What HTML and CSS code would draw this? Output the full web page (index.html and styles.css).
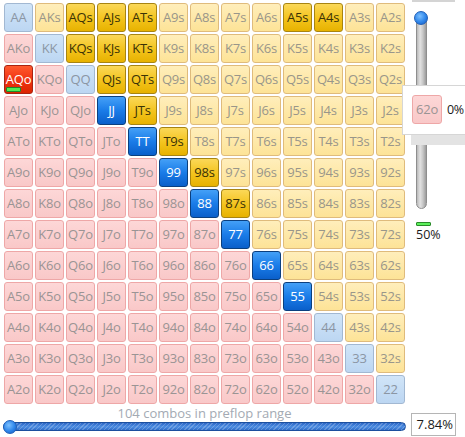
FILE: index.html
```html
<!DOCTYPE html>
<html>
<head>
<meta charset="utf-8">
<link rel="stylesheet" href="styles.css">
</head>
<body>
<div class="app">
  <div class="top">
    <div class="grid">
      <div class="c p">AA</div><div class="c s">AKs</div><div class="c s on">AQs</div><div class="c s on">AJs</div><div class="c s on">ATs</div><div class="c s">A9s</div><div class="c s">A8s</div><div class="c s">A7s</div><div class="c s">A6s</div><div class="c s on">A5s</div><div class="c s on">A4s</div><div class="c s">A3s</div><div class="c s">A2s</div>
      <div class="c o">AKo</div><div class="c p">KK</div><div class="c s on">KQs</div><div class="c s on">KJs</div><div class="c s on">KTs</div><div class="c s">K9s</div><div class="c s">K8s</div><div class="c s">K7s</div><div class="c s">K6s</div><div class="c s">K5s</div><div class="c s">K4s</div><div class="c s">K3s</div><div class="c s">K2s</div>
      <div class="c o hot">AQo<span class="mark"></span></div><div class="c o">KQo</div><div class="c p">QQ</div><div class="c s on">QJs</div><div class="c s on">QTs</div><div class="c s">Q9s</div><div class="c s">Q8s</div><div class="c s">Q7s</div><div class="c s">Q6s</div><div class="c s">Q5s</div><div class="c s">Q4s</div><div class="c s">Q3s</div><div class="c s">Q2s</div>
      <div class="c o">AJo</div><div class="c o">KJo</div><div class="c o">QJo</div><div class="c p on">JJ</div><div class="c s on">JTs</div><div class="c s">J9s</div><div class="c s">J8s</div><div class="c s">J7s</div><div class="c s">J6s</div><div class="c s">J5s</div><div class="c s">J4s</div><div class="c s">J3s</div><div class="c s">J2s</div>
      <div class="c o">ATo</div><div class="c o">KTo</div><div class="c o">QTo</div><div class="c o">JTo</div><div class="c p on">TT</div><div class="c s on">T9s</div><div class="c s">T8s</div><div class="c s">T7s</div><div class="c s">T6s</div><div class="c s">T5s</div><div class="c s">T4s</div><div class="c s">T3s</div><div class="c s">T2s</div>
      <div class="c o">A9o</div><div class="c o">K9o</div><div class="c o">Q9o</div><div class="c o">J9o</div><div class="c o">T9o</div><div class="c p on">99</div><div class="c s on">98s</div><div class="c s">97s</div><div class="c s">96s</div><div class="c s">95s</div><div class="c s">94s</div><div class="c s">93s</div><div class="c s">92s</div>
      <div class="c o">A8o</div><div class="c o">K8o</div><div class="c o">Q8o</div><div class="c o">J8o</div><div class="c o">T8o</div><div class="c o">98o</div><div class="c p on">88</div><div class="c s on">87s</div><div class="c s">86s</div><div class="c s">85s</div><div class="c s">84s</div><div class="c s">83s</div><div class="c s">82s</div>
      <div class="c o">A7o</div><div class="c o">K7o</div><div class="c o">Q7o</div><div class="c o">J7o</div><div class="c o">T7o</div><div class="c o">97o</div><div class="c o">87o</div><div class="c p on">77</div><div class="c s">76s</div><div class="c s">75s</div><div class="c s">74s</div><div class="c s">73s</div><div class="c s">72s</div>
      <div class="c o">A6o</div><div class="c o">K6o</div><div class="c o">Q6o</div><div class="c o">J6o</div><div class="c o">T6o</div><div class="c o">96o</div><div class="c o">86o</div><div class="c o">76o</div><div class="c p on">66</div><div class="c s">65s</div><div class="c s">64s</div><div class="c s">63s</div><div class="c s">62s</div>
      <div class="c o">A5o</div><div class="c o">K5o</div><div class="c o">Q5o</div><div class="c o">J5o</div><div class="c o">T5o</div><div class="c o">95o</div><div class="c o">85o</div><div class="c o">75o</div><div class="c o">65o</div><div class="c p on">55</div><div class="c s">54s</div><div class="c s">53s</div><div class="c s">52s</div>
      <div class="c o">A4o</div><div class="c o">K4o</div><div class="c o">Q4o</div><div class="c o">J4o</div><div class="c o">T4o</div><div class="c o">94o</div><div class="c o">84o</div><div class="c o">74o</div><div class="c o">64o</div><div class="c o">54o</div><div class="c p">44</div><div class="c s">43s</div><div class="c s">42s</div>
      <div class="c o">A3o</div><div class="c o">K3o</div><div class="c o">Q3o</div><div class="c o">J3o</div><div class="c o">T3o</div><div class="c o">93o</div><div class="c o">83o</div><div class="c o">73o</div><div class="c o">63o</div><div class="c o">53o</div><div class="c o">43o</div><div class="c p">33</div><div class="c s">32s</div>
      <div class="c o">A2o</div><div class="c o">K2o</div><div class="c o">Q2o</div><div class="c o">J2o</div><div class="c o">T2o</div><div class="c o">92o</div><div class="c o">82o</div><div class="c o">72o</div><div class="c o">62o</div><div class="c o">52o</div><div class="c o">42o</div><div class="c o">32o</div><div class="c p">22</div>
    </div>
    <div class="side">
      <div class="frame"></div>
      <div class="vslider">
        <div class="vtrack"></div>
        <div class="knob vknob"></div>
      </div>
      <div class="gbar"></div>
      <div class="pct">50%</div>
    </div>
  </div>
  <div class="bottom">
    <div class="hcol">
      <div class="label">104 combos in preflop range</div>
      <div class="hslider">
        <div class="htrack"></div>
        <div class="knob hknob"></div>
      </div>
    </div>
    <div class="valbox">7.84%</div>
  </div>
  <div class="tip">
    <div class="c o tipcell">62o</div>
    <div class="tipval">0%</div>
  </div>
</div>
</body>
</html>
```

FILE: styles.css
```css
html, body {
  margin: 0;
  padding: 0;
  overflow: hidden;
  background: #ffffff;
}
body {
  width: 465px;
  height: 437px;
  font-family: "Open Sans", "Noto Sans", "DejaVu Sans", sans-serif;
}
.app {
  position: relative;
  width: 465px;
  height: 437px;
}
.top {
  display: flex;
  align-items: flex-start;
}
.grid {
  display: grid;
  grid-template-columns: repeat(13, 29px);
  grid-auto-rows: 29px;
  gap: 2px;
  padding: 3px 0 0 4px;
}
.c {
  position: relative;
  box-sizing: border-box;
  display: flex;
  align-items: center;
  justify-content: center;
  border: 1px solid;
  border-radius: 3px;
  font-size: 13px;
  letter-spacing: -0.2px;
  line-height: 1;
}
.c.s {
  background: linear-gradient(#ffeebb, #fde397);
  border-color: #dfbb7c;
  color: #99968a;
}
.c.o {
  background: linear-gradient(#fdd7d7, #f9c8c8);
  border-color: #eea7a7;
  color: #9a9494;
}
.c.p {
  background: linear-gradient(#d1e5f8, #bcd6f2);
  border-color: #a2b8d2;
  color: #8b96a4;
}
.c.s.on {
  background: linear-gradient(#fbd858, #f3c31c 55%, #e7b200);
  border-color: #a78412;
  color: #3a3206;
}
.c.p.on {
  background: linear-gradient(#44a0f7, #1a7ce8 50%, #0a5fca);
  border-color: #0b3f7e;
  color: #ffffff;
}
.c.hot {
  background: linear-gradient(#ff5a2e, #f03414 50%, #dc2400);
  border-color: #a82412;
  color: #ffffff;
}
.mark {
  position: absolute;
  left: 1px;
  bottom: 1px;
  width: 13px;
  height: 3px;
  background: #52ea52;
  border: 1px solid #21862b;
  border-radius: 1px;
}
.side {
  display: flex;
  flex-direction: column;
  margin-left: 7px;
  width: 48px;
}
.frame {
  height: 2px;
  width: 43px;
  background: #d4d4d4;
}
.vslider {
  position: relative;
  margin-top: 9px;
  margin-left: 2px;
  width: 14px;
  height: 198px;
}
.vtrack {
  box-sizing: border-box;
  margin-left: 2px;
  margin-top: 6px;
  width: 11px;
  height: 192px;
  border: 1px solid #8e8e8e;
  border-radius: 0 0 6px 6px;
  background: linear-gradient(to right, #b9b9b9, #e2e2e2 35%, #c8c8c8 65%, #9c9c9c);
}
.knob {
  position: absolute;
  box-sizing: border-box;
  width: 14px;
  height: 14px;
  border-radius: 50%;
  background: radial-gradient(circle at 40% 35%, #7cc0ff, #2f86ea 55%, #1659c0);
  border: 1px solid #1f5fb8;
}
.vknob {
  left: 0;
  top: 0;
}
.gbar {
  box-sizing: border-box;
  margin-top: 13px;
  margin-left: 4px;
  width: 15px;
  height: 4px;
  background: #5cf05c;
  border: 1px solid #2a8a2a;
  border-radius: 1px;
}
.pct {
  margin-left: 4px;
  margin-top: 2px;
  font-size: 12.5px;
  line-height: 14px;
  color: #1a1a1a;
}
.bottom {
  display: flex;
  align-items: flex-start;
}
.hcol {
  width: 403px;
  margin-left: 3px;
}
.label {
  text-align: center;
  font-size: 13px;
  line-height: 16px;
  height: 15px;
  padding-top: 1px;
  color: #a3aab3;
}
.hslider {
  position: relative;
  height: 14px;
}
.htrack {
  box-sizing: border-box;
  position: relative;
  top: 2px;
  height: 9px;
  border: 1px solid #1b4f9e;
  border-radius: 5px;
  background:
    repeating-linear-gradient(135deg, rgba(255,255,255,0.22) 0 1px, rgba(255,255,255,0) 1px 3px),
    linear-gradient(#2b66c6, #4e8ee2 55%, #2f6cc8);
}
.hknob {
  left: 0;
  top: 0;
}
.valbox {
  box-sizing: border-box;
  margin-left: 5px;
  margin-top: 9px;
  width: 45px;
  height: 23px;
  border: 1px solid #b5b5b5;
  font-size: 13px;
  line-height: 21px;
  text-align: right;
  padding-right: 2px;
  color: #1a1a1a;
}
.tip {
  position: absolute;
  left: 402px;
  top: 85px;
  box-sizing: border-box;
  width: 80px;
  height: 50px;
  display: flex;
  align-items: flex-start;
  gap: 5px;
  padding: 9px 0 0 9px;
  background: #ffffff;
  border: 1px solid #d6d6d6;
  box-shadow: 9px 10px 0 #e3e3e3;
}
.tipcell {
  width: 30px;
  height: 29px;
  flex: none;
}
.tipval {
  font-size: 12.5px;
  letter-spacing: -0.3px;
  line-height: 29px;
  color: #1a1a1a;
}
```
